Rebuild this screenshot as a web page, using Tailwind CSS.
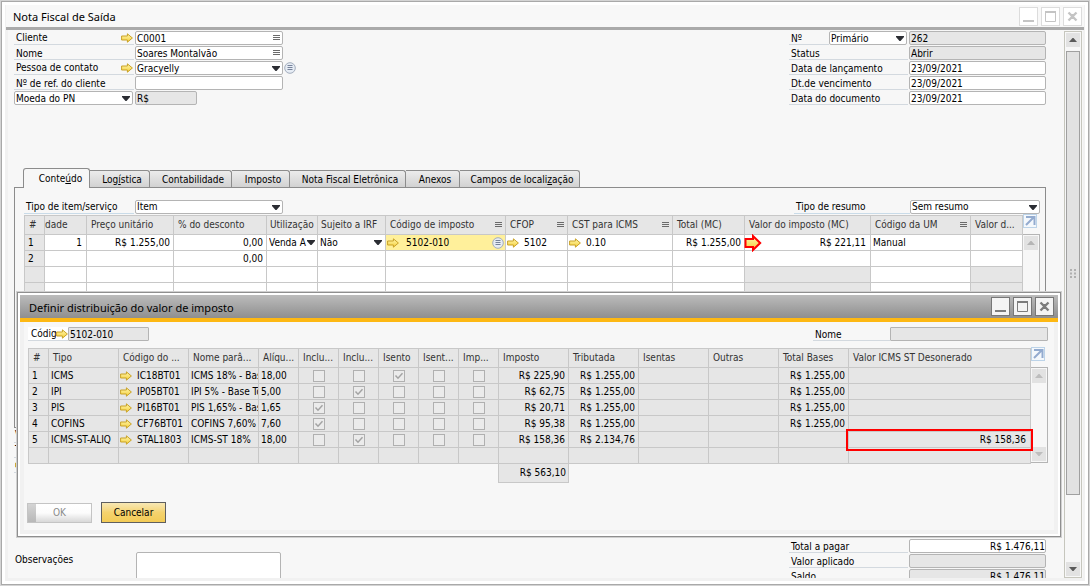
<!DOCTYPE html>
<html lang="pt-BR">
<head>
<meta charset="utf-8">
<title>Nota Fiscal de Saída</title>
<script src="https://cdn.jsdelivr.net/npm/@tailwindcss/browser@4"></script>
</head>
<body class="h-screen overflow-hidden bg-[#d4d4d4] p-px font-['DejaVu_Sans_Condensed','DejaVu_Sans',sans-serif] text-[10px] leading-[14px] text-black">

<svg class="absolute size-0">
  <defs>
    <linearGradient id="gold" x1="0" y1="0" x2="0" y2="1"><stop offset="0" stop-color="#fff7b0"/><stop offset="1" stop-color="#f5cf38"/></linearGradient>
  </defs>
  <symbol id="arrow" viewBox="0 0 12 10"><path d="M.6 3h5.800V.8L11.400 5 6.400 9.200V7H.6z" fill="url(#gold)" stroke="#c9a227" stroke-width="1"/></symbol>
  <symbol id="lines" viewBox="0 0 7 6"><path d="M0 .5h7M0 2.500h7M0 4.500h7" stroke="#6b6b6b"/></symbol>
  <symbol id="caret" viewBox="0 0 8 5"><path d="M0 0h8v1L4.500 5h-1L0 1z" fill="#2b2d33"/></symbol>
  <symbol id="list" viewBox="0 0 12 12"><circle cx="6" cy="6" r="5.300" fill="#e6ecf4" stroke="#a3adbd"/><path d="M3.500 3.500h5M3.500 5.500h5M3.500 7.500h5" stroke="#76829a"/></symbol>
  <symbol id="expand" viewBox="0 0 14 14"><rect x=".5" y=".5" width="13" height="13" fill="#f4f8fc" stroke="#bcd3e8"/><path d="M3 3h8.500V11M11 3l-8 8" fill="none" stroke="#93abcf" stroke-width="2"/></symbol>
  <symbol id="min" viewBox="0 0 19 19"><path d="M4 14h11" stroke="currentColor" stroke-width="2"/></symbol>
  <symbol id="max" viewBox="0 0 19 19"><path d="M4.500 4.500h10v10h-10z" fill="none" stroke="currentColor"/><path d="M4 5h11" stroke="currentColor" stroke-width="2"/></symbol>
  <symbol id="close" viewBox="0 0 19 19"><path d="M5.500 5.500l8 8M13.500 5.500l-8 8" stroke="currentColor" stroke-width="2.400"/><path d="M8 7h3v5H8z" fill="currentColor"/></symbol>
  <symbol id="up" viewBox="0 0 8 4"><path d="M0 4L3.500 0h1L8 4z" fill="currentColor"/></symbol>
  <symbol id="down" viewBox="0 0 8 4"><path d="M0 0l3.500 4h1L8 0z" fill="currentColor"/></symbol>
</svg>

<div class="flex h-full flex-col border border-[#a9a9a9] bg-white p-[3px]">
  <div class="relative flex min-h-0 flex-1 flex-col bg-[#f1f1f1] pb-[3px]">

    <header class="mx-px flex h-[22px] shrink-0 items-center justify-between bg-[#f8f8f8] pr-[2px] pl-[7px]">
      <h1 class="pt-[2px] font-['Noto_Sans',sans-serif] text-[11px] leading-[16px]">Nota Fiscal de Saída</h1>
      <div class="flex gap-[3px] text-[#c4c4c4]">
        <button aria-label="Minimizar" class="size-[19px] border border-[#dcdcdc] bg-white"><svg class="-m-px size-[19px]"><use href="#min"/></svg></button>
        <button aria-label="Maximizar" class="size-[19px] border border-[#dcdcdc] bg-white"><svg class="-m-px size-[19px]"><use href="#max"/></svg></button>
        <button aria-label="Fechar" class="size-[19px] border border-[#dcdcdc] bg-white"><svg class="-m-px size-[19px]"><use href="#close"/></svg></button>
      </div>
    </header>
    <div class="mx-px h-[3px] shrink-0 bg-[#aaaaaa]"></div>

    <div class="mr-[2px] ml-[3px] flex min-h-0 flex-1 bg-[#f7f7f7]">
      <main class="min-w-0 flex-1 overflow-hidden pt-px pr-[18px] pl-[6px]">

        <!-- document header -->
        <section class="flex justify-between [&_input]:pt-[2px] [&_label]:leading-[16px] [&_select]:pt-[2px]">
          <div class="grid grid-cols-[120px_148px_16px] gap-x-px gap-y-px">
            <label for="cli" class="flex h-[14px] items-center justify-between border-b border-[#d3d9df] pr-px pl-[2px]">Cliente<svg class="h-[10px] w-[12px]"><use href="#arrow"/></svg></label>
            <div class="flex h-[14px] items-center rounded-[2px] border border-[#b4b4b4] bg-white px-px"><input id="cli" value="C0001" class="min-w-0 flex-1 outline-none"><svg class="mr-px h-[6px] w-[7px]"><use href="#lines"/></svg></div>
            <span></span>
            <label for="nom" class="h-[14px] border-b border-[#d3d9df] pl-[2px]">Nome</label>
            <div class="flex h-[14px] items-center rounded-[2px] border border-[#b4b4b4] bg-white px-px"><input id="nom" value="Soares Montalvão" class="min-w-0 flex-1 outline-none"><svg class="mr-px h-[6px] w-[7px]"><use href="#lines"/></svg></div>
            <span></span>
            <label for="con" class="flex h-[14px] items-center justify-between border-b border-[#d3d9df] pr-px pl-[2px]">Pessoa de contato<svg class="h-[10px] w-[12px]"><use href="#arrow"/></svg></label>
            <div class="flex h-[14px] items-center rounded-[2px] border border-[#b4b4b4] bg-white px-px"><select id="con" class="min-w-0 flex-1 appearance-none outline-none"><option>Gracyelly</option></select><svg class="mr-px h-[5px] w-[8px]"><use href="#caret"/></svg></div>
            <button aria-label="Lista" class="flex h-[14px] items-center"><svg class="size-3"><use href="#list"/></svg></button>
            <label for="ref" class="h-[14px] border-b border-[#d3d9df] pl-[2px]">Nº de ref. do cliente</label>
            <input id="ref" class="h-[14px] rounded-[2px] border border-[#b4b4b4] bg-white px-px outline-none">
            <span></span>
            <div class="mr-px flex h-[14px] items-center rounded-[2px] border border-[#b4b4b4] bg-white px-px"><select aria-label="Moeda" class="min-w-0 flex-1 appearance-none outline-none"><option>Moeda do PN</option></select><svg class="mr-px h-[5px] w-[8px]"><use href="#caret"/></svg></div>
            <input aria-label="Símbolo da moeda" value="R$" readonly class="h-[14px] w-[62px] rounded-[2px] border border-[#b4b4b4] bg-[#e6e6e6] px-px outline-none">
          </div>
          <div class="grid grid-cols-[119px_137px] gap-x-px gap-y-px">
            <div class="flex h-[14px] justify-between"><label for="num" class="flex-1 border-b border-[#d3d9df] pl-[2px]">Nº</label>
              <div class="mr-px flex h-[14px] w-[78px] items-center rounded-[2px] border border-[#b4b4b4] bg-white px-px"><select aria-label="Série" class="min-w-0 flex-1 appearance-none outline-none"><option>Primário</option></select><svg class="mr-px h-[5px] w-[8px]"><use href="#caret"/></svg></div></div>
            <input id="num" value="262" readonly class="h-[14px] rounded-[2px] border border-[#b4b4b4] bg-[#e6e6e6] px-px outline-none">
            <label for="sta" class="h-[14px] border-b border-[#d3d9df] pl-[2px]">Status</label>
            <input id="sta" value="Abrir" readonly class="h-[14px] rounded-[2px] border border-[#b4b4b4] bg-[#e6e6e6] px-px outline-none">
            <label for="lan" class="h-[14px] border-b border-[#d3d9df] pl-[2px]">Data de lançamento</label>
            <input id="lan" value="23/09/2021" class="h-[14px] rounded-[2px] border border-[#b4b4b4] bg-white px-px outline-none">
            <label for="ven" class="h-[14px] border-b border-[#d3d9df] pl-[2px]">Dt.de vencimento</label>
            <input id="ven" value="23/09/2021" class="h-[14px] rounded-[2px] border border-[#b4b4b4] bg-white px-px outline-none">
            <label for="doc" class="h-[14px] border-b border-[#d3d9df] pl-[2px]">Data do documento</label>
            <input id="doc" value="23/09/2021" class="h-[14px] rounded-[2px] border border-[#b4b4b4] bg-white px-px outline-none">
          </div>
        </section>

        <!-- tabs -->
        <nav role="tablist" class="mt-[63px] flex h-[19px] items-end pl-[9px]">
          <button role="tab" aria-selected="true" class="relative z-10 -mb-px h-[20px] w-[67px] rounded-t-[3px] border border-b-0 border-[#8c8c8c] bg-[#f7f7f7] pt-px pl-[8px]">Conte<u>ú</u>do</button>
          <button role="tab" class="h-[17px] w-[60px] rounded-tr-[3px] border border-b-0 border-l-0 border-[#8c8c8c] bg-linear-to-b from-[#ececec] to-[#d2d2d2] pt-px pl-[5px]">Log<u>í</u>stica</button>
          <button role="tab" class="h-[17px] w-[82px] rounded-tr-[3px] border border-b-0 border-l-0 border-[#8c8c8c] bg-linear-to-b from-[#ececec] to-[#d2d2d2] pt-px pl-[5px]">Contabilidade</button>
          <button role="tab" class="h-[17px] w-[58px] rounded-tr-[3px] border border-b-0 border-l-0 border-[#8c8c8c] bg-linear-to-b from-[#ececec] to-[#d2d2d2] pt-px pl-[5px]">Imposto</button>
          <button role="tab" class="h-[17px] w-[116px] rounded-tr-[3px] border border-b-0 border-l-0 border-[#8c8c8c] bg-linear-to-b from-[#ececec] to-[#d2d2d2] pt-px pl-[5px] whitespace-nowrap">Nota Fiscal Eletrônica</button>
          <button role="tab" class="h-[17px] w-[54px] rounded-tr-[3px] border border-b-0 border-l-0 border-[#8c8c8c] bg-linear-to-b from-[#ececec] to-[#d2d2d2] pt-px pl-[5px]">Anexos</button>
          <button role="tab" class="h-[17px] w-[120px] rounded-tr-[3px] border border-b-0 border-l-0 border-[#8c8c8c] bg-linear-to-b from-[#ececec] to-[#d2d2d2] pt-px pl-[5px] whitespace-nowrap">Campos de locali<u>z</u>ação</button>
        </nav>

        <div class="h-[241px] border border-[#8c8c8c] pt-[12px] pr-[5px] pl-[9px]">
          <div class="flex h-[14px] justify-between">
            <div class="flex"><label for="tip" class="mr-px h-[14px] w-[110px] border-b border-[#c9dbe8] pl-[2px]">Tipo de item/serviço</label>
              <div class="flex h-[14px] w-[148px] items-center rounded-[2px] border border-[#b4b4b4] bg-white px-px"><select id="tip" class="min-w-0 flex-1 appearance-none outline-none"><option>Item</option></select><svg class="mr-px h-[5px] w-[8px]"><use href="#caret"/></svg></div></div>
            <div class="flex"><label for="res" class="h-[14px] w-[116px] border-b border-[#c9dbe8] pl-[2px]">Tipo de resumo</label>
              <div class="flex h-[14px] w-[130px] items-center rounded-[2px] border border-[#b4b4b4] bg-white px-px"><select id="res" class="min-w-0 flex-1 appearance-none outline-none"><option>Sem resumo</option></select><svg class="mr-px h-[5px] w-[8px]"><use href="#caret"/></svg></div></div>
          </div>

          <div class="mt-px flex">
            <table class="w-full min-w-0 flex-1 table-fixed border-collapse [&_td]:overflow-hidden [&_td]:border [&_td]:border-[#c8c8c8] [&_td]:p-0 [&_td]:whitespace-nowrap [&_th]:border [&_th]:border-[#c8c8c8] [&_th]:p-0 [&_th]:text-left [&_th]:font-normal [&_th]:whitespace-nowrap">
              <colgroup><col class="w-[20px]"><col class="w-[42px]"><col class="w-[87px]"><col class="w-[93px]"><col class="w-[51px]"><col class="w-[68px]"><col class="w-[120px]"><col class="w-[62px]"><col class="w-[105px]"><col class="w-[72px]"><col class="w-[126px]"><col class="w-[100px]"><col></colgroup>
              <thead><tr class="h-[19px] bg-[#e6e6e6] text-[#333]">
                <th><div class="pl-1">#</div></th><th>dade</th><th><div class="pl-1">Preço unitário</div></th><th><div class="pl-1">% do desconto</div></th><th><div class="overflow-hidden pl-[3px]">Utilização</div></th><th><div class="overflow-hidden pl-[3px]">Sujeito a IRF</div></th>
                <th><div class="flex items-center justify-between pr-[3px] pl-1">Código de imposto<svg class="h-[6px] w-[7px]"><use href="#lines"/></svg></div></th>
                <th><div class="flex items-center justify-between pr-[3px] pl-1">CFOP<svg class="h-[6px] w-[7px]"><use href="#lines"/></svg></div></th>
                <th><div class="flex items-center justify-between pr-[3px] pl-1">CST para ICMS<svg class="h-[6px] w-[7px]"><use href="#lines"/></svg></div></th>
                <th><div class="pl-1">Total (MC)</div></th><th><div class="pl-1">Valor do imposto (MC)</div></th>
                <th><div class="flex items-center justify-between pr-[3px] pl-1">Código da UM<svg class="h-[6px] w-[7px]"><use href="#lines"/></svg></div></th>
                <th><div class="pl-1">Valor d...</div></th></tr></thead>
              <tbody class="bg-white">
                <tr class="h-4"><td class="bg-[#e6e6e6]"><div class="pl-[3px]">1</div></td><td class="text-right"><div class="pr-1">1</div></td><td class="text-right"><div class="pr-[3px]">R$ 1.255,00</div></td><td class="text-right"><div class="pr-[3px]">0,00</div></td>
                  <td><div class="flex items-center pr-[2px] pl-[2px]"><select aria-label="Utilização" class="min-w-0 flex-1 appearance-none overflow-hidden outline-none"><option>Venda A</option></select><svg class="h-[5px] w-[8px] shrink-0"><use href="#caret"/></svg></div></td>
                  <td><div class="flex items-center pr-[3px] pl-[2px]"><select aria-label="Sujeito a IRF" class="min-w-0 flex-1 appearance-none outline-none"><option>Não</option></select><svg class="h-[5px] w-[8px] shrink-0"><use href="#caret"/></svg></div></td>
                  <td class="bg-[#fff09b]"><div class="flex items-center pr-px pl-px"><svg class="mr-[7px] h-[10px] w-[12px]"><use href="#arrow"/></svg><span class="flex-1">5102-010</span><svg class="size-[12px]"><use href="#list"/></svg></div></td>
                  <td><div class="flex items-center gap-[5px] pl-px"><svg class="h-[10px] w-[12px]"><use href="#arrow"/></svg>5102</div></td>
                  <td><div class="flex items-center gap-[5px] pl-px"><svg class="h-[10px] w-[12px]"><use href="#arrow"/></svg>0.10</div></td>
                  <td class="text-right"><div class="pr-[3px]">R$ 1.255,00</div></td>
                  <td class="overflow-visible!"><div class="flex h-[15px] items-center justify-between pr-1"><svg class="-my-1 -ml-px h-[18px] w-[18px] shrink-0" viewBox="0 0 18 18"><path d="M1.500 5H9V2l7.200 7L9 16v-3H1.500z" fill="url(#gold)" stroke="#f00" stroke-width="2"/></svg>R$ 221,11</div></td>
                  <td><div class="pl-[2px]">Manual</div></td><td></td></tr>
                <tr class="h-4"><td class="bg-[#e6e6e6]"><div class="pl-[3px]">2</div></td><td></td><td></td><td class="text-right"><div class="pr-[3px]">0,00</div></td><td></td><td></td><td></td><td></td><td></td><td></td><td></td><td></td><td></td></tr>
                <tr class="h-4"><td class="bg-[#e6e6e6]"></td><td></td><td></td><td></td><td></td><td></td><td></td><td></td><td></td><td></td><td class="bg-[#e6e6e6]"></td><td></td><td class="bg-[#e6e6e6]"></td></tr>
                <tr class="h-4"><td class="bg-[#e6e6e6]"></td><td></td><td></td><td></td><td></td><td></td><td></td><td></td><td></td><td></td><td class="bg-[#e6e6e6]"></td><td></td><td class="bg-[#e6e6e6]"></td></tr>
              </tbody>
            </table>
            <div class="flex w-[17px] flex-col">
              <button aria-label="Expandir" class="-mt-px size-[14px]"><svg class="size-[14px]"><use href="#expand"/></svg></button>
              <div class="mt-[6px] flex-1 border border-l-0 border-[#b4b4b4] p-px"><button aria-label="Subir" class="flex size-[14px] items-center justify-center bg-[#e2e2e2] text-[#b5b5b5]"><svg class="h-[4px] w-[8px]"><use href="#up"/></svg></button></div>
            </div>
          </div>
        </div>

        <!-- footer fields -->
        <section class="flex justify-between">
          <div class="w-[267px]">
            <div class="h-[15px] border-b border-[#d3d9df] pl-px">Vendedor</div>
            <div class="h-[15px] border-b border-[#d3d9df] pl-px">Titular</div>
            <div class="flex h-[15px] items-center border-b border-[#d3d9df] pl-px"><svg class="h-[10px] w-[12px]"><use href="#arrow"/></svg></div>
            <div class="mt-[79px] flex justify-between"><label for="obs" class="pt-px pl-px">Observações</label><textarea id="obs" class="h-[40px] w-[145px] resize-none rounded-[2px] border border-[#b4b4b4] bg-white outline-none"></textarea></div>
          </div>
          <div class="mt-[111px] grid grid-cols-[119px_137px] content-start gap-x-px gap-y-px [&_input]:pt-[2px] [&_label]:leading-[16px]">
            <label for="tot" class="h-[14px] border-b border-[#d3d9df] pl-[2px]">Total a pagar</label>
            <input id="tot" value="R$ 1.476,11" class="h-[14px] rounded-[2px] border border-[#b4b4b4] bg-white text-right outline-none">
            <label for="apl" class="h-[14px] border-b border-[#d3d9df] pl-[2px]">Valor aplicado</label>
            <input id="apl" readonly class="h-[14px] rounded-[2px] border border-[#b4b4b4] bg-[#e6e6e6] text-right outline-none">
            <label for="sal" class="h-[14px] border-b border-[#d3d9df] pl-[2px]">Saldo</label>
            <input id="sal" value="R$ 1.476,11" readonly class="h-[14px] rounded-[2px] border border-[#b4b4b4] bg-[#e6e6e6] text-right outline-none">
          </div>
        </section>
      </main>

      <!-- page scrollbar -->
      <div class="mt-px mr-px flex w-[18px] flex-col border border-[#c6c6bd] bg-[#f7f7f7] px-px text-[#5a5a5a]">
        <button aria-label="Subir" class="mt-px flex h-[14px] items-center justify-center bg-[#e2e2e2]"><svg class="h-[4px] w-[8px]"><use href="#up"/></svg></button>
        <div class="mt-[4px] flex h-[444px] items-center justify-center border border-[#a0a0a0] bg-[#e2e2e2]"><svg class="h-[9px] w-[7px]" viewBox="0 0 7 9"><path d="M1 0v9M5 0v9" stroke="#b0b0b0" stroke-width="2" stroke-dasharray="2 1.500"/></svg></div>
        <div class="flex-1"></div>
        <button aria-label="Descer" class="mb-px flex h-[14px] items-center justify-center bg-[#e2e2e2]"><svg class="h-[4px] w-[8px]"><use href="#down"/></svg></button>
      </div>
    </div>
  </div>
</div>

<!-- tax distribution window -->
<div role="dialog" aria-labelledby="dt" class="absolute top-[291px] right-[28px] left-[16px] border border-[#d0d0d0]">
  <div class="border border-[#8f8f8f] bg-white p-[2px]">
    <div class="flex h-[23px] items-center justify-between bg-linear-to-b from-[#bcbcbc] to-[#8f8f8f] pr-[4px] pl-[9px]">
      <h2 id="dt" class="pt-[2px] font-['Noto_Sans',sans-serif] text-[11px] leading-[16px]">Definir distribuição do valor de imposto</h2>
      <div class="flex gap-[3px] text-[#7c7c7c]">
        <button aria-label="Minimizar" class="size-[19px] border border-[#777] bg-[#f4f4f4]"><svg class="-m-px size-[19px]"><use href="#min"/></svg></button>
        <button aria-label="Maximizar" class="size-[19px] border border-[#777] bg-[#f4f4f4]"><svg class="-m-px size-[19px]"><use href="#max"/></svg></button>
        <button aria-label="Fechar" class="size-[19px] border border-[#777] bg-[#f4f4f4]"><svg class="-m-px size-[19px]"><use href="#close"/></svg></button>
      </div>
    </div>
    <div class="h-[4px] bg-[#fdb813]"></div>
    <div class="bg-[#f1f1f1] px-[4px] pb-[4px]">
      <div class="bg-[#f7f7f7] pt-[5px] pr-[6px] pb-[7px] pl-[4px]">
        <div class="flex justify-between [&_input]:pt-[2px] [&_label]:leading-[16px]">
          <div class="flex h-[14px]"><label for="cod" class="flex w-[40px] items-center justify-between overflow-hidden border-b border-[#d3d9df] bg-white pl-[3px]"><span class="w-[25px] overflow-hidden whitespace-nowrap">Código</span><svg class="h-[10px] w-[12px] shrink-0"><use href="#arrow"/></svg></label><input id="cod" value="5102-010" readonly class="h-[14px] w-[81px] rounded-[1px] border border-[#b4b4b4] bg-[#e6e6e6] px-px outline-none"></div>
          <div class="flex h-[14px]"><label for="nm" class="w-[77px] border-b border-[#d3d9df] pl-[2px]">Nome</label><input id="nm" readonly class="h-[14px] w-[158px] rounded-[1px] border border-[#b4b4b4] bg-[#e6e6e6] outline-none"></div>
        </div>

        <div class="mt-[7px] flex">
          <table class="w-full min-w-0 flex-1 table-fixed border-collapse [&_td]:border [&_td]:border-[#c8c8c8] [&_td]:p-0 [&_td]:whitespace-nowrap [&_th]:border [&_th]:border-[#c8c8c8] [&_th]:p-0 [&_th]:text-left [&_th]:font-normal [&_th]:whitespace-nowrap">
            <colgroup><col class="w-[20px]"><col class="w-[70px]"><col class="w-[70px]"><col class="w-[70px]"><col class="w-[40px]"><col class="w-[40px]"><col class="w-[40px]"><col class="w-[40px]"><col class="w-[40px]"><col class="w-[40px]"><col class="w-[70px]"><col class="w-[70px]"><col class="w-[70px]"><col class="w-[70px]"><col class="w-[70px]"><col></colgroup>
            <thead><tr class="h-[19px] bg-[#e6e6e6] text-[#333]">
              <th><div class="pl-1">#</div></th><th><div class="pl-1">Tipo</div></th><th><div class="pl-1">Código do ...</div></th><th><div class="pl-1">Nome parâ...</div></th><th><div class="pl-1">Alíqu...</div></th><th><div class="pl-1">Inclu...</div></th><th><div class="pl-1">Inclu...</div></th><th><div class="pl-1">Isento</div></th><th><div class="pl-1">Isent...</div></th><th><div class="pl-1">Imp...</div></th><th><div class="pl-1">Imposto</div></th><th><div class="pl-1">Tributada</div></th><th><div class="pl-1">Isentas</div></th><th><div class="pl-1">Outras</div></th><th><div class="pl-1">Total Bases</div></th><th><div class="pl-1">Valor ICMS ST Desonerado</div></th>
            </tr></thead>
            <tbody id="taxes" class="bg-[#e6e6e6]"></tbody>
            <tfoot><tr class="h-[19px]"><td colspan="10" class="border-b-0! border-l-0!"></td><td class="bg-[#e6e6e6] text-right"><div class="pr-[2px]">R$ 563,10</div></td><td colspan="5" class="border-r-0! border-b-0!"></td></tr></tfoot>
          </table>
          <div class="flex w-[17px] flex-col">
            <button aria-label="Expandir" class="-mt-px size-[14px]"><svg class="size-[14px]"><use href="#expand"/></svg></button>
            <div class="mt-[6px] flex h-[96px] flex-col justify-between border border-l-0 border-[#b4b4b4] p-px text-[#bdbdbd]">
              <button aria-label="Subir" class="flex size-[14px] items-center justify-center bg-[#e2e2e2]"><svg class="h-[4px] w-[8px]"><use href="#up"/></svg></button>
              <button aria-label="Descer" class="flex size-[14px] items-center justify-center bg-[#e2e2e2]"><svg class="h-[4px] w-[8px]"><use href="#down"/></svg></button>
            </div>
          </div>
        </div>

        <div class="mt-[19px] -ml-px flex items-center gap-[9px]">
          <button disabled class="h-[20px] w-[65px] border border-[#c4c4c4] bg-linear-to-b from-white via-[#fcfcfc] to-[#d8d8d8] text-[#8a8a8a]"><span class="flex h-full items-center"><span class="h-full w-[8px] bg-linear-to-b from-[#d4d4d4] to-[#b8b8b8]"></span><span class="flex-1 pr-[8px]">OK</span></span></button>
          <button class="h-[21px] w-[65px] border border-[#5f5f5f] bg-linear-to-b from-[#f8e8b4] via-[#f5d36e] to-[#f3cb55]">Cancelar</button>
        </div>
      </div>
    </div>
  </div>
</div>

<script>
  const taxes = [
    ['ICMS', 'IC18BT01', 'ICMS 18% - Base', '18,00', 2, 'R$ 225,90', 'R$ 1.255,00', 'R$ 1.255,00', ''],
    ['IPI', 'IP05BT01', 'IPI 5% - Base Total', '5,00', 1, 'R$ 62,75', 'R$ 1.255,00', 'R$ 1.255,00', ''],
    ['PIS', 'PI16BT01', 'PIS 1,65% - Base', '1,65', 0, 'R$ 20,71', 'R$ 1.255,00', 'R$ 1.255,00', ''],
    ['COFINS', 'CF76BT01', 'COFINS 7,60%', '7,60', 0, 'R$ 95,38', 'R$ 1.255,00', 'R$ 1.255,00', ''],
    ['ICMS-ST-ALIQ', 'STAL1803', 'ICMS-ST 18%', '18,00', 1, 'R$ 158,36', 'R$ 2.134,76', '', 'R$ 158,36'],
  ];
  const flags = ['Incluído no preço', 'Incluído na base', 'Isento', 'Isento parcial', 'Importação'];
  const text = v => `<td><div class="overflow-hidden pl-[2px]">${v}</div></td>`;
  const money = v => `<td class="text-right"><div class="pr-[3px]">${v}</div></td>`;
  const box = (name, on) => `<td><label class="relative flex h-[14px] items-center justify-center"><input type="checkbox" disabled aria-label="${name}" ${on ? 'checked' : ''} class="size-[12px] appearance-none border border-[#b0b0b0] bg-[#ebebeb]">${on ? '<svg class="absolute size-[10px]" viewBox="0 0 10 10"><path d="M1.500 4.500L4 7.200 8.500 2.300" fill="none" stroke="#a3a3a3" stroke-width="1.500"/></svg>' : ''}</label></td>`;
  document.getElementById('taxes').innerHTML = taxes.map((t, i) => `<tr class="h-4">
    <td><div class="pl-[3px]">${i + 1}</div></td>${text(t[0])}
    <td><div class="flex items-center gap-[5px] pl-px"><svg class="h-[10px] w-[12px] shrink-0"><use href="#arrow"/></svg>${t[1]}</div></td>
    ${text(t[2])}${text(t[3])}${flags.map((f, k) => box(f, k === t[4])).join('')}
    ${money(t[5])}${money(t[6])}<td></td><td></td>${money(t[7])}
    <td class="text-right"><div class="relative pr-1">${t[8]}${t[8] ? '<span class="absolute -inset-x-[3px] -inset-y-[4px] border-2 border-[#f00]"></span>' : ''}</div></td></tr>`).join('')
    + '<tr class="h-4">' + '<td></td>'.repeat(16) + '</tr>';
</script>
</body>
</html>
